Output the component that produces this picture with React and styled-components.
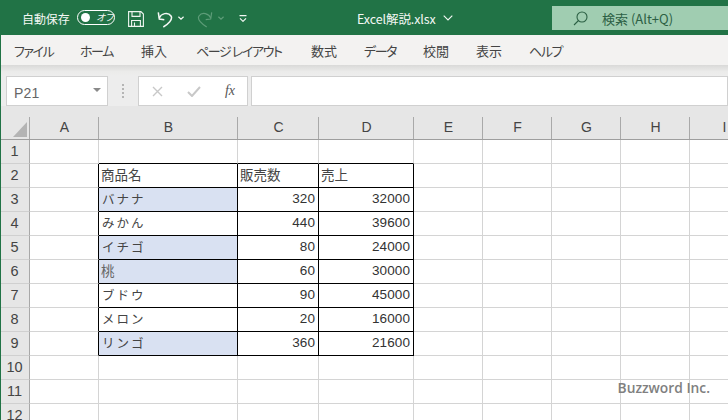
import React from "react";
import styled, { createGlobalStyle } from "styled-components";

const Global = createGlobalStyle`
  html, body { margin: 0; padding: 0; background: #fff; overflow: hidden; }
  #root { width: 728px; height: 420px; overflow: hidden; }
  * { box-sizing: border-box; }
`;

const UI = `"Noto Sans CJK JP", "Liberation Sans", sans-serif`;

const Page = styled.div`
  position: relative;
  width: 728px;
  height: 420px;
  overflow: hidden;
  background: #fff;
  font-family: ${UI};
  border-left: 1px solid #217346;
`;
const TitleBar = styled.div`
  height: 35px;
  margin-left: -1px;
  background: #217346;
  color: #f4f8f5;
  display: grid;
  grid-template-columns: 352px 200px 176px;
  align-items: center;
`;
const QuickAccess = styled.div`
  display: flex;
  align-items: center;
  padding-left: 22px;
  height: 100%;
`;
const AutoSave = styled.span`
  font-size: 12px;
  width: 49px;
  white-space: nowrap;
  letter-spacing: -0.1px;
  margin-top: 1px;
`;
const Toggle = styled.span`
  width: 38px;
  height: 15px;
  margin-left: 6px;
  border: 1px solid #fff;
  border-radius: 8px;
  display: flex;
  align-items: center;
  padding-left: 3px;
  gap: 6px;
  font-size: 9.5px;
  font-style: italic;
  line-height: 1;
  letter-spacing: -1px;
`;
const Knob = styled.i`
  display: block;
  flex: none;
  width: 9px;
  height: 9px;
  border-radius: 50%;
  background: #fff;
`;
const QaIcon = styled.svg`
  display: block;
  flex: none;
  margin-left: ${(p) => p.$ml || 0}px;
  margin-top: ${(p) => p.$mt || 0}px;
`;
const DocTitle = styled.div`
  font-size: 12.5px;
  display: flex;
  align-items: center;
  gap: 7px;
  padding-left: 5px;
  margin-top: 1px;
  letter-spacing: -0.1px;
  white-space: nowrap;
`;
const SearchBox = styled.div`
  height: 24px;
  margin-top: 1px;
  background: #a0cdb1;
  color: #2c6044;
  display: flex;
  align-items: center;
  padding-left: 21px;
  font-size: 13px;
  gap: 14px;
  white-space: nowrap;
`;
const Ribbon = styled.div`
  height: 30px;
  background: #f3f2f1;
  display: flex;
  align-items: center;
  padding-left: 13px;
  font-size: 13px;
  color: #444;
  font-feature-settings: "palt";
`;
const Tab = styled.span`
  width: ${(p) => p.$w}px;
  flex: none;
  white-space: nowrap;
  letter-spacing: ${(p) => (p.$kana ? -1.4 : 0)}px;
`;
const Shade = styled.div`
  height: 11px;
  background: linear-gradient(#d9d9d8, #ebebea 60%, #ededed);
`;
const FormulaBar = styled.div`
  height: 30px;
  background: #ededed;
  display: flex;
  align-items: stretch;
  padding-left: 5px;
`;
const Field = styled.div`
  width: ${(p) => p.$w}px;
  flex: ${(p) => (p.$grow ? 1 : "none")};
  margin-left: ${(p) => p.$ml || 0}px;
  background: #fff;
  border: 1px solid #d0d0d0;
  display: flex;
  align-items: center;
`;
const NameBox = styled(Field)`
  justify-content: space-between;
  padding: 4px 6px 0 7px;
  color: #666;
  font: 14px "Liberation Sans", sans-serif;
  letter-spacing: 0.2px;
`;
const Caret = styled.i`
  width: 0;
  height: 0;
  border-left: 4px solid transparent;
  border-right: 4px solid transparent;
  border-top: 4px solid #8a8a8a;
  margin-top: -7px;
`;
const Dots = styled.div`
  width: 30px;
  flex: none;
  display: flex;
  flex-direction: column;
  align-items: center;
  justify-content: center;
  gap: 2px;
  margin-top: -1px;
`;
const Dot = styled.i`
  width: 2px;
  height: 2px;
  background: #b5b5b5;
`;
const FnBox = styled(Field)`
  justify-content: space-between;
  padding: 0 12px 0 13px;
`;
const Fx = styled.span`
  font: italic 14px "Liberation Serif", serif;
  color: #555;
  margin-top: -1px;
`;
const Sheet = styled.div`
  display: grid;
  margin-left: -1px;
  grid-template-columns: 30px 69px 139px 81px 95px 69px 69px 69px 69px 69px;
  grid-template-rows: 34px repeat(12, 24px);
`;
const HeadBase = styled.div`
  background: #e6e6e6;
  border-bottom: 1px solid #9e9e9e;
  position: relative;
  display: flex;
  &::after {
    content: "";
    position: absolute;
    right: 0;
    bottom: 0;
    height: 22px;
    width: 1px;
    background: #a9a9a9;
  }
`;
const Corner = styled(HeadBase)`
  align-items: flex-end;
  justify-content: flex-end;
  padding: 0 3px 2px 0;
`;
const ColHead = styled(HeadBase)`
  align-items: flex-end;
  justify-content: center;
  font: 14px/24px "Liberation Sans", sans-serif;
  color: #444;
`;
const RowHead = styled.div`
  background: #e6e6e6;
  border-right: 1px solid #a8a8a8;
  border-bottom: 1px solid #d0d0d0;
  display: flex;
  align-items: center;
  justify-content: center;
  padding-bottom: 1px;
  font: 14.5px "Liberation Sans", sans-serif;
  color: #444;
`;
const Cell = styled.div`
  border-right: 1px solid ${(p) => (p.$inkR ? "#000" : "#d4d4d4")};
  border-bottom: 1px solid ${(p) => (p.$inkB ? "#000" : "#d4d4d4")};
  background: ${(p) => (p.$fill ? "#d9e1f2" : "#fff")};
  display: flex;
  align-items: center;
  justify-content: ${(p) => (p.$num ? "flex-end" : "flex-start")};
  padding: 0 3px ${(p) => (p.$num ? 2 : 3)}px ${(p) => (p.$kana ? 3 : 2)}px;
  font: ${(p) => (p.$kana ? 12.5 : 13.5)}px "Liberation Sans", "Noto Sans CJK JP", sans-serif;
  color: ${(p) => (p.$dim ? "#666" : p.$num ? "#333" : "#444")};
  letter-spacing: ${(p) => (p.$num ? 0.1 : p.$kana ? 2 : 0)}px;
  white-space: nowrap;
  overflow: hidden;
`;
const Mark = styled.div`
  position: absolute;
  right: 18px;
  top: 378px;
  font: 600 13.8px "Open Sans", sans-serif;
  color: #808080;
`;

const tabs = [
  ["ファイル", 66, true], ["ホーム", 61, true], ["挿入", 55, false], ["ページ レイアウト", 115, true],
  ["数式", 53, false], ["データ", 59, true], ["校閲", 53, false], ["表示", 53, false], ["ヘルプ", 60, true],
];
const cols = ["A", "B", "C", "D", "E", "F", "G", "H", "I"];
const data = {
  2: ["商品名", "販売数", "売上"],
  3: ["バナナ", "320", "32000"],
  4: ["みかん", "440", "39600"],
  5: ["イチゴ", "80", "24000"],
  6: ["桃", "60", "30000"],
  7: ["ブドウ", "90", "45000"],
  8: ["メロン", "20", "16000"],
  9: ["リンゴ", "360", "21600"],
};
const filled = new Set([3, 5, 6, 9]);

function Rows() {
  const out = [];
  for (let r = 1; r <= 12; r++) {
    out.push(<RowHead key={`h${r}`}>{r}</RowHead>);
    cols.forEach((c, i) => {
      const inTable = r >= 2 && r <= 9 && i >= 1 && i <= 3;
      const inkR = (r >= 2 && r <= 9 && i === 0) || inTable;
      const inkB = r >= 1 && r <= 9 && i >= 1 && i <= 3;
      const text = inTable ? data[r][i - 1] : "";
      const num = inTable && r > 2 && i > 1;
      const kana = inTable && r > 2 && i === 1 && text !== "桃";
      out.push(
        <Cell key={c + r} $inkR={inkR} $inkB={inkB} $num={num} $kana={kana}
          $fill={inTable && i === 1 && filled.has(r)} $dim={text === "桃"}>
          {text}
        </Cell>
      );
    });
  }
  return out;
}

export default function App() {
  return (
    <Page>
      <Global />
      <TitleBar>
        <QuickAccess>
          <AutoSave>自動保存</AutoSave>
          <Toggle><Knob /><span>オフ</span></Toggle>
          <QaIcon $ml={13} $mt={2} width="16" height="16" viewBox="0 0 16 16" fill="none" stroke="#eef5f0" strokeWidth="1.1">
            <path d="M.6.6h12.300L15.400 3V15.400H.6z" />
            <path d="M4 .6v4.800h8V.6M3.600 15.400V9.500h8.800v5.900M6.500 11.500v3.900" />
          </QaIcon>
          <QaIcon $ml={13} $mt={3} width="16" height="17" viewBox="0 0 16 17" fill="none" stroke="#f4f8f5" strokeWidth="1.5">
            <path d="M1.300 1.300 2.300 8l5 .7" />
            <path d="M2.300 7C4 2.500 11 .5 14 5c2.300 3.500-3 8-7.700 11" />
          </QaIcon>
          <QaIcon $ml={5} $mt={1} width="6" height="4" viewBox="0 0 6 4" fill="none" stroke="#f4f8f5" strokeWidth="1.2">
            <path d="M.4.7 3 3.100 5.600.7" />
          </QaIcon>
          <QaIcon $ml={13} $mt={3} width="16" height="17" viewBox="0 0 16 17" fill="none" stroke="#5d9c78" strokeWidth="1.2">
            <path d="M14.700 1.300 13.700 8l-5 .7" />
            <path d="M13.700 7C12 2.500 5 .5 2 5c-2.300 3.500 3 8 7.700 11" />
          </QaIcon>
          <QaIcon $ml={5} $mt={1} width="6" height="4" viewBox="0 0 6 4" fill="none" stroke="#5d9c78" strokeWidth="1.2">
            <path d="M.4.7 3 3.100 5.600.7" />
          </QaIcon>
          <QaIcon $ml={15} $mt={1} width="8" height="7" viewBox="0 0 8 7" fill="none" stroke="#f4f8f5" strokeWidth="1.2">
            <path d="M.5.7h7M1 3.300l3 3 3-3" />
          </QaIcon>
        </QuickAccess>
        <DocTitle>
          Excel解説.xlsx
          <svg width="10" height="6" viewBox="0 0 10 6" fill="none" stroke="#f4f8f5" strokeWidth="1.1"><path d="M.7.7 5 5 9.300.7" /></svg>
        </DocTitle>
        <SearchBox>
          <svg width="15" height="15" viewBox="0 0 15 15" fill="none" stroke="#2c6044" strokeWidth="1.1">
            <circle cx="9" cy="6" r="5" /><path d="M5.500 9.500 1 14" />
          </svg>
          <span>検索 (Alt+Q)</span>
        </SearchBox>
      </TitleBar>
      <Ribbon>{tabs.map(([t, w, k]) => <Tab key={t} $w={w} $kana={k}>{t}</Tab>)}</Ribbon>
      <Shade />
      <FormulaBar>
        <NameBox $w={102}>P21<Caret /></NameBox>
        <Dots><Dot /><Dot /><Dot /><Dot /></Dots>
        <FnBox $w={110}>
          <svg width="11" height="11" viewBox="0 0 11 11" fill="none" stroke="#c8c8c8" strokeWidth="1.4"><path d="M1 1l9 9M10 1l-9 9" /></svg>
          <svg width="14" height="11" viewBox="0 0 14 11" fill="none" stroke="#c8c8c8" strokeWidth="2"><path d="M1 6l4 4 8-9" /></svg>
          <Fx>fx</Fx>
        </FnBox>
        <Field $grow $ml={3} />
      </FormulaBar>
      <Sheet>
        <Corner>
          <svg width="14" height="15" viewBox="0 0 14 15"><path d="M14 0v15H0z" fill="#b4b4b4" /></svg>
        </Corner>
        {cols.map((c) => <ColHead key={c}>{c}</ColHead>)}
        <Rows />
      </Sheet>
      <Mark>Buzzword Inc.</Mark>
    </Page>
  );
}
